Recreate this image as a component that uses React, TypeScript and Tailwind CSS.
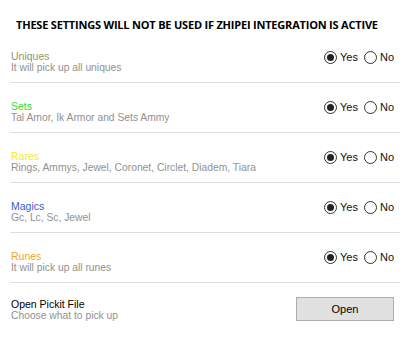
import React, { useState } from 'react';

const ROWS = [
  { key: 'uniques', label: 'Uniques', sub: 'It will pick up all uniques', color: 'text-[#9c9464]' },
  { key: 'sets', label: 'Sets', sub: 'Tal Amor, Ik Armor and Sets Ammy', color: 'text-[#2ee02e]' },
  { key: 'rares', label: 'Rares', sub: 'Rings, Ammys, Jewel, Coronet, Circlet, Diadem, Tiara', color: 'text-[#f2e83a]' },
  { key: 'magics', label: 'Magics', sub: 'Gc, Lc, Sc, Jewel', color: 'text-[#3c5ad2]' },
  { key: 'runes', label: 'Runes', sub: 'It will pick up all runes', color: 'text-[#f2a432]' },
];

function Radio({ checked, label, onClick }: { checked: boolean; label: string; onClick: () => void }) {
  return (
    <button onClick={onClick} className="flex items-center gap-[3px] text-[11px] leading-[13px] text-[#111]">
      <span className="w-[13px] h-[13px] rounded-full border border-[#333] bg-white flex items-center justify-center">
        {checked && <span className="w-[7px] h-[7px] rounded-full bg-[#222]" />}
      </span>
      {label}
    </button>
  );
}

export default function App() {
  const [values, setValues] = useState<Record<string, boolean>>({
    uniques: true, sets: true, rares: true, magics: true, runes: true,
  });

  return (
    <div className="w-[405px] h-[356px] bg-white font-['Liberation_Sans',Arial,sans-serif]">
      <h1 className="pt-[18px] pl-[16px] h-[33px] whitespace-nowrap text-[11px] leading-[14px] font-bold text-black font-['Open_Sans',sans-serif] tracking-[-0.2px]">
        THESE SETTINGS WILL NOT BE USED IF ZHIPEI INTEGRATION IS ACTIVE
      </h1>

      <div className="ml-[10px] w-[390px]">
        {ROWS.map(row => (
          <div key={row.key} className="h-[50px] pl-[1px] border-b border-[#dedede] flex items-center justify-between">
            <div className="self-start pt-[17px] flex flex-col">
              <span className={`text-[10.5px] leading-[12px] ${row.color}`}>{row.label}</span>
              <span className="text-[10.3px] leading-[11px] text-[#919191]">{row.sub}</span>
            </div>
            <div className="flex items-center gap-[6px] mr-[6px]">
              <Radio checked={values[row.key]} label="Yes" onClick={() => setValues(v => ({ ...v, [row.key]: true }))} />
              <Radio checked={!values[row.key]} label="No" onClick={() => setValues(v => ({ ...v, [row.key]: false }))} />
            </div>
          </div>
        ))}

        <div className="pl-[1px] flex items-start justify-between">
          <div className="pt-[15px] flex flex-col">
            <span className="text-[10.5px] leading-[12px] text-black">Open Pickit File</span>
            <span className="text-[10.3px] leading-[11px] text-[#919191]">Choose what to pick up</span>
          </div>
          <button className="mt-[14px] mr-[6px] w-[98px] h-[24px] bg-[#e1e1e1] border border-[#adadad] text-[11px] text-black">
            Open
          </button>
        </div>
      </div>
    </div>
  );
}
